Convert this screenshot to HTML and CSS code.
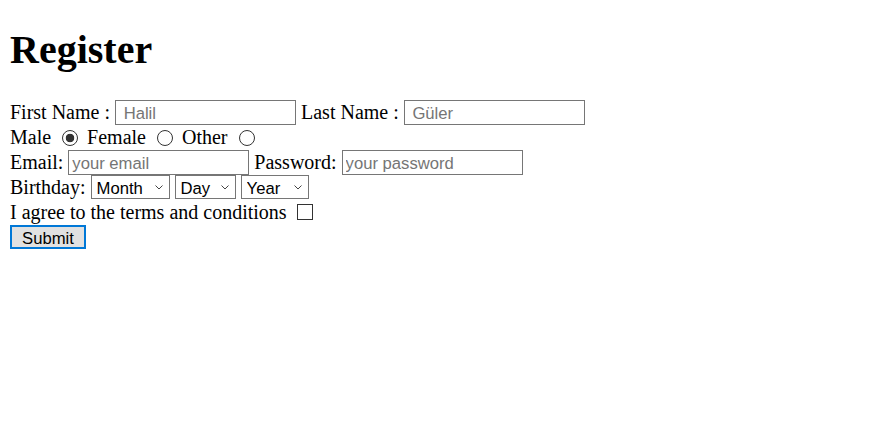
FILE: index.html
```html
<!DOCTYPE html>
<html>
<head>
<meta charset="utf-8">
<title>Register</title>
<link rel="stylesheet" href="styles.css">
</head>
<body>
<h1 class="title">Register</h1>
<form class="form">
  <div class="row">
    <label>First Name :</label>
    <input class="field" type="text" placeholder=" Halil">
    <label>Last Name :</label>
    <input class="field" type="text" placeholder=" Güler">
  </div>
  <div class="row">
    <label>Male</label>
    <input class="radio" type="radio" name="g" checked>
    <label>Female</label>
    <input class="radio" type="radio" name="g">
    <label>Other</label>
    <input class="radio" type="radio" name="g">
  </div>
  <div class="row">
    <label>Email:</label>
    <input class="field" type="email" placeholder="your email">
    <label>Password:</label>
    <input class="field" type="password" placeholder="your password">
  </div>
  <div class="row">
    <label>Birthday:</label>
    <span class="select-wrap">
      <select class="sel sel-month"><option>Month</option></select>
      <svg class="chev" width="8" height="5" viewBox="0 0 8 5"><path d="M0.5 0.5 L4 4 L7.5 0.5" fill="none" stroke="#444" stroke-width="1"/></svg>
    </span>
    <span class="select-wrap">
      <select class="sel sel-day"><option>Day</option></select>
      <svg class="chev" width="8" height="5" viewBox="0 0 8 5"><path d="M0.5 0.5 L4 4 L7.5 0.5" fill="none" stroke="#444" stroke-width="1"/></svg>
    </span>
    <span class="select-wrap">
      <select class="sel sel-year"><option>Year</option></select>
      <svg class="chev" width="8" height="5" viewBox="0 0 8 5"><path d="M0.5 0.5 L4 4 L7.5 0.5" fill="none" stroke="#444" stroke-width="1"/></svg>
    </span>
  </div>
  <div class="row">
    <label>I agree to the terms and conditions</label>
    <input class="check" type="checkbox">
  </div>
  <div class="row">
    <button class="submit" type="button">Submit</button>
  </div>
</form>
</body>
</html>
```
FILE: styles.css
```css
body {
  margin: 0 10px 10px;
  font-family: "Liberation Serif", "Times New Roman", serif;
  font-size: 20px;
  color: #000;
  background: #fff;
}
.title {
  font-family: "Liberation Serif", "Times New Roman", serif;
  font-size: 40px;
  font-weight: bold;
  line-height: 46px;
  margin: 27px 0 26.8px;
}
.form {
  margin: 0;
}
.row {
  display: flex;
  align-items: center;
  gap: 5px;
  height: 25px;
}
.row label {
  white-space: nowrap;
}
.field, .sel, .submit {
  font-family: "Liberation Sans", Arial, sans-serif;
  font-size: 16.67px;
  color: #000;
}
.field {
  box-sizing: border-box;
  width: 181px;
  height: 25px;
  margin: 0;
  border: 1px solid #767676;
  padding: 3px 3px 0;
  border-radius: 0;
  background: #fff;
  outline: none;
}
.field::placeholder {
  color: #757575;
}
.radio {
  appearance: none;
  -webkit-appearance: none;
  box-sizing: border-box;
  width: 16px;
  height: 16px;
  margin: 2px 4px 0 6px;
  border: 1px solid #333;
  border-radius: 50%;
  background: #fff;
}
.radio:checked {
  background: radial-gradient(circle, #333 0, #333 4px, #fff 4.6px);
}
.check {
  appearance: none;
  -webkit-appearance: none;
  box-sizing: border-box;
  width: 16px;
  height: 16px;
  margin: 0 0 0 5px;
  border: 1px solid #333;
  border-radius: 0;
  background: #fff;
}
.select-wrap {
  position: relative;
  display: inline-flex;
}
.sel {
  appearance: none;
  -webkit-appearance: none;
  box-sizing: border-box;
  height: 24px;
  margin: 0;
  padding: 2px 0 0 5px;
  border: 1px solid #767676;
  border-radius: 0;
  background: #fff;
}
.sel-month { width: 79px; }
.sel-day { width: 61px; }
.sel-year { width: 68px; }
.chev {
  position: absolute;
  right: 7px;
  top: 10px;
  pointer-events: none;
}
.submit {
  box-sizing: border-box;
  width: 76px;
  height: 24px;
  margin: 0;
  padding: 2px 0 0;
  border: 2px solid #0078d7;
  border-radius: 0;
  background: #e1e1e1;
}
```
